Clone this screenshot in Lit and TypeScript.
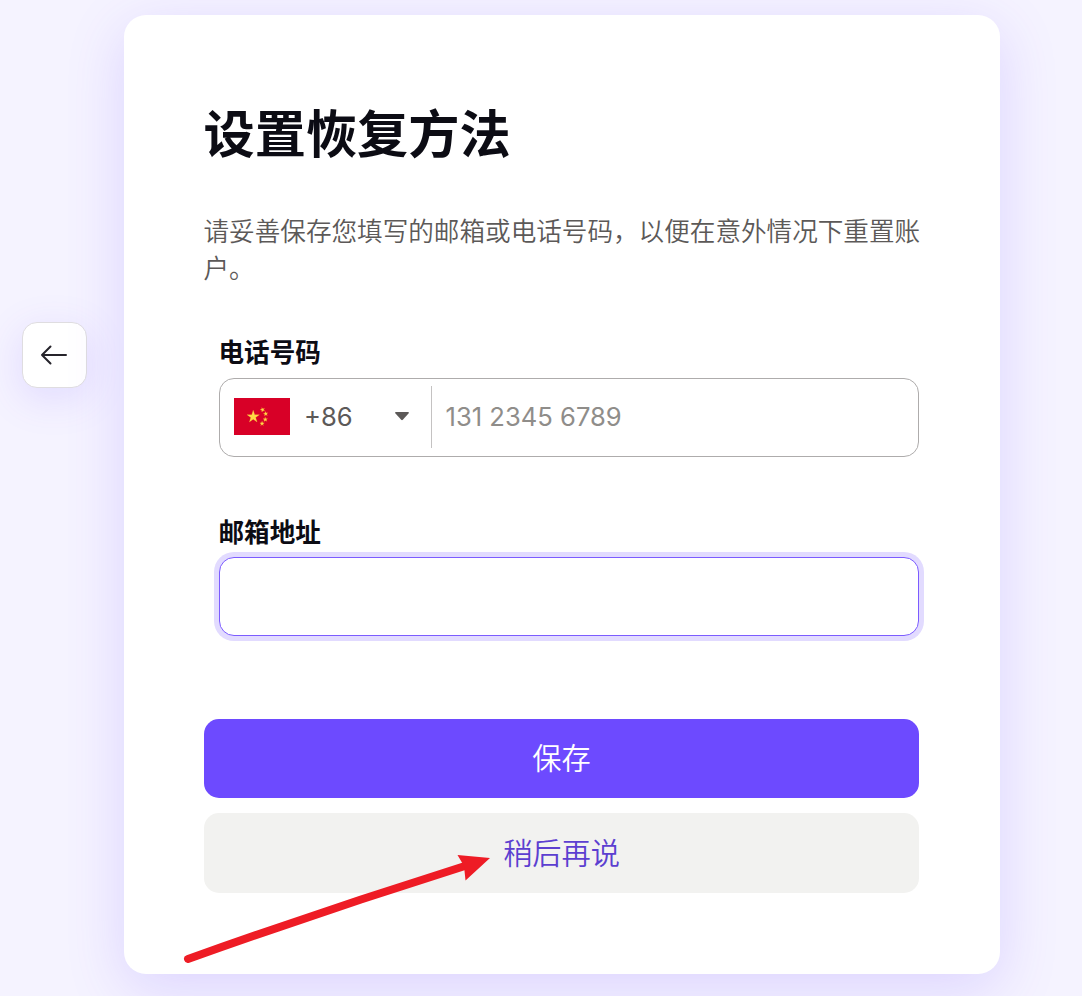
import { LitElement, html, css } from "lit";
import { customElement, state } from "lit/decorators.js";

@customElement("china-flag")
class ChinaFlag extends LitElement {
  static styles = css`
    :host { display: block; width: 56px; height: 37px; }
    svg { display: block; }
  `;
  render() {
    return html`<svg width="56" height="37" viewBox="0 0 56 37">
      <rect width="56" height="37" fill="#d80027" />
      <g fill="#ffda44" stroke="#ffda44" stroke-width=".2">
        <path d="M19.2 12.2l1.5 4.5h4.7l-3.8 2.8 1.5 4.5-3.9-2.8-3.8 2.8 1.4-4.5-3.8-2.8h4.8z" />
        <path d="M27.8 9.6l1.1 1.3 1.6-.6-.9 1.4 1 1.4-1.6-.5-1.1 1.4-.1-1.7-1.6-.6 1.6-.6z" />
        <path d="M31.5 13.6l.7 1.4 1.6-.2-1.2 1.2.7 1.5-1.5-.7-1.2 1.1.2-1.6-1.4-.8 1.6-.3z" />
        <path d="M31.2 19.2l.6 1.5h1.7l-1.3 1 .5 1.6-1.4-.9-1.3 1 .4-1.6-1.3-1 1.6-.1z" />
        <path d="M28.1 23.2l.5 1.6 1.7.1-1.4 1 .5 1.6-1.3-1-1.4 1 .5-1.6-1.3-1 1.6-.1z" />
      </g>
    </svg>`;
  }
}

@customElement("app-root")
export class AppRoot extends LitElement {
  @state() private email = "";

  static styles = css`
    :host {
      display: block;
      position: relative;
      width: 1082px;
      height: 996px;
      overflow: hidden;
      background: #f5f3ff;
      color: #0c0c14;
      font-family: Inter, "Noto Sans CJK SC", sans-serif;
    }
    * { box-sizing: border-box; }
    .page {
      display: flex;
      align-items: flex-start;
      height: 100%;
      padding: 15px 0 0 22px;
    }
    .back {
      display: flex;
      align-items: center;
      justify-content: center;
      width: 65px;
      height: 66px;
      margin-top: 307px;
      padding: 0 2px 0 0;
      background: #fff;
      border: 1.5px solid #dfdde0;
      border-radius: 15px;
      box-shadow: 0 10px 40px rgba(109, 74, 255, 0.15);
    }
    .card {
      width: 876px;
      height: 958.5px;
      margin-left: 36.5px;
      padding: 81px 80.5px 0 80.5px;
      background: #fff;
      border-radius: 22px;
      box-shadow: 0 15px 58px rgba(109, 74, 255, 0.18);
    }
    h1 {
      margin: 0 0 0 -0.5px;
      font-size: 51.2px;
      line-height: 76px;
      font-weight: 700;
      white-space: nowrap;
    }
    .intro {
      margin: 41px 0 0 -0.5px;
      font-size: 25.6px;
      line-height: 37px;
      font-weight: 350;
      color: #5c5958;
      white-space: nowrap;
    }
    .field { padding-left: 14.5px; }
    .phone { margin-top: 46px; }
    .mail { margin-top: 56px; }
    label {
      display: block;
      height: 44.5px;
      font-size: 25.6px;
      line-height: 40px;
      font-weight: 700;
    }
    .box {
      display: flex;
      align-items: center;
      height: 79px;
      border: 1.5px solid #aeacac;
      border-radius: 15px;
      background: #fff;
      padding: 0 0 1px 14.5px;
      font-size: 25.6px;
    }
    .code { width: 91px; margin-left: 14px; color: #5c5958; }
    .divider { width: 1px; height: 62px; margin: 0 13.5px 0 22px; background: #c4c2c2; }
    input {
      flex: 1;
      min-width: 0;
      border: 0;
      padding: 0;
      outline: 0;
      background: transparent;
      font: inherit;
      color: #0c0c14;
    }
    input::placeholder { color: #8f8d8a; opacity: 1; }
    .focused {
      border-color: #7c5cff;
      box-shadow: 0 0 0 5px #e2dbff;
    }
    .btn {
      display: block;
      width: 100%;
      height: 79px;
      border: 0;
      padding: 0 0 6px;
      border-radius: 15px;
      font-family: inherit;
      font-size: 29.2px;
      font-weight: 350;
    }
    .save { margin-top: 83px; background: #6d4aff; color: #fff; }
    .later { margin-top: 15px; height: 80px; padding-bottom: 4px; background: #f2f2f0; color: #5c3fd0; }
    .pointer { position: absolute; left: 0; top: 0; pointer-events: none; }
  `;

  render() {
    return html`
      <div class="page">
        <button class="back" aria-label="返回">
          <svg width="28" height="22" viewBox="0 0 28 22" fill="none" stroke="#26242b" stroke-width="2" stroke-linecap="round" stroke-linejoin="round">
            <path d="M26 11H2M10.500 2.500L2 11L10.500 19.500" />
          </svg>
        </button>
        <main class="card">
          <h1>设置恢复方法</h1>
          <p class="intro">请妥善保存您填写的邮箱或电话号码，以便在意外情况下重置账<br />户。</p>
          <div class="field phone">
            <label>电话号码</label>
            <div class="box">
              <china-flag></china-flag>
              <span class="code">+86</span>
              <svg width="14" height="9" viewBox="0 0 14 9"><path d="M.7 0h12.6q1 .4.2 1.4L7.8 7.8q-.8.7-1.6 0L.5 1.4Q-.3.4.7 0z" fill="#5c5958" /></svg>
              <span class="divider"></span>
              <input type="tel" placeholder="131 2345 6789" />
            </div>
          </div>
          <div class="field mail">
            <label>邮箱地址</label>
            <div class="box focused">
              <input type="email" .value=${this.email} @input=${(e: Event) => (this.email = (e.target as HTMLInputElement).value)} />
            </div>
          </div>
          <button class="btn save">保存</button>
          <button class="btn later">稍后再说</button>
        </main>
      </div>
      <svg class="pointer" width="1082" height="996" viewBox="0 0 1082 996">
        <path d="M188 959Q328 909 468 865" fill="none" stroke="#ee1c25" stroke-width="8" stroke-linecap="round" />
        <path d="M490 858L457.500 855L464 866L465.500 880.500Z" fill="#ee1c25" />
      </svg>
    `;
  }
}
